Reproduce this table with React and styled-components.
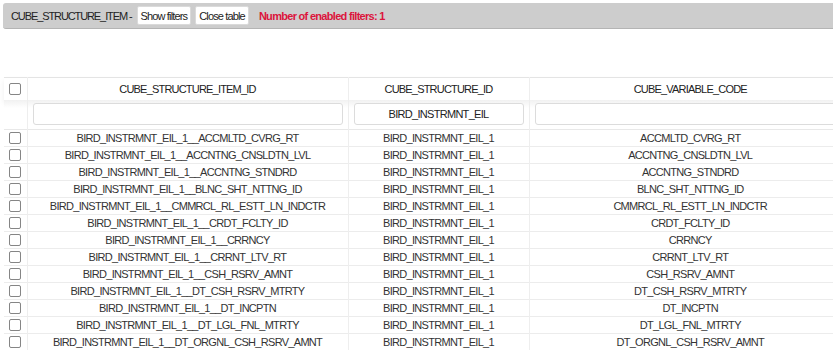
import React from "react";
import styled, { createGlobalStyle } from "styled-components";

const GlobalStyle = createGlobalStyle`
  html, body {
    margin: 0;
    padding: 0;
    overflow: hidden;
    background: #fff;
  }
  body {
    font-family: "Liberation Sans", Arial, sans-serif;
    font-size: 11px;
    letter-spacing: -0.7px;
    color: #333;
  }
`;

const rows = [
  "ACCMLTD_CVRG_RT",
  "ACCNTNG_CNSLDTN_LVL",
  "ACCNTNG_STNDRD",
  "BLNC_SHT_NTTNG_ID",
  "CMMRCL_RL_ESTT_LN_INDCTR",
  "CRDT_FCLTY_ID",
  "CRRNCY",
  "CRRNT_LTV_RT",
  "CSH_RSRV_AMNT",
  "DT_CSH_RSRV_MTRTY",
  "DT_INCPTN",
  "DT_LGL_FNL_MTRTY",
  "DT_ORGNL_CSH_RSRV_AMNT",
];

const Page = styled.div`
  width: 900px;
  padding: 3px 0 0 3px;
`;

const Toolbar = styled.div`
  display: flex;
  align-items: center;
  height: 25px;
  padding: 0 8px;
  background: #cdcdcd;
  border-bottom: 1px solid #b4b4b4;
  border-radius: 3px 0 0 3px;
  color: #222;
`;

const Title = styled.span`
  margin-right: 5px;
  letter-spacing: -1.1px;
`;

const ToolButton = styled.button`
  height: 19px;
  margin-right: 4px;
  padding: 0 3px;
  background: #fff;
  border: 1px solid #dadada;
  border-radius: 2px;
  font-family: inherit;
  font-size: 11px;
  letter-spacing: -0.85px;
  color: #222;
`;

const FilterCount = styled.span`
  margin-left: 6px;
  font-weight: bold;
  color: #dc143c;
`;

const Table = styled.table`
  margin: 48px 0 0 1px;
  border-collapse: collapse;
  table-layout: fixed;
  width: 847px;
  border-top: 1px solid #e4e4e4;
`;

const HeadRow = styled.tr`
  height: 22px;
  box-shadow: 0 3px 6px rgba(0, 0, 0, 0.07);
`;

const HeadCell = styled.th`
  padding: 0;
  font-weight: normal;
  color: #222;
  text-align: center;
  letter-spacing: -0.8px;
  border-left: 1px solid #eee;
  &:first-child {
    border-left: none;
  }
`;

const FilterRow = styled.tr`
  height: 30px;
  border-bottom: 1px solid #e8e8e8;
  background: linear-gradient(#f1f1f1 0, #fff 8px);
`;

const FilterCell = styled.td`
  padding: 0 5px;
  border-left: 1px solid #eee;
  &:first-child {
    border-left: none;
  }
`;

const FilterInput = styled.input`
  box-sizing: border-box;
  display: block;
  width: 100%;
  height: 22px;
  border: 1px solid #dcdcdc;
  border-radius: 3px;
  background: #fff;
  font-family: inherit;
  font-size: 11px;
  letter-spacing: -0.7px;
  color: #222;
  text-align: center;
  outline: none;
`;

const BodyRow = styled.tr`
  height: 16px;
  border-bottom: 1px solid #ececec;
`;

const Cell = styled.td`
  padding: 0;
  height: 16px;
  line-height: 16px;
  text-align: center;
  white-space: nowrap;
  overflow: hidden;
  border-left: 1px solid #eee;
  &:first-child {
    border-left: none;
  }
`;

const Check = styled.span`
  display: inline-block;
  box-sizing: border-box;
  width: 12px;
  height: 12px;
  vertical-align: middle;
  margin-top: -2px;
  border: 1px solid #858585;
  border-radius: 2px;
  background: #fff;
`;

export default function App() {
  return (
    <Page>
      <GlobalStyle />
      <Toolbar>
        <Title>CUBE_STRUCTURE_ITEM -</Title>
        <ToolButton>Show filters</ToolButton>
        <ToolButton>Close table</ToolButton>
        <FilterCount>Number of enabled filters: 1</FilterCount>
      </Toolbar>

      <Table>
        <colgroup>
          <col style={{ width: 23 }} />
          <col style={{ width: 321 }} />
          <col style={{ width: 181 }} />
          <col style={{ width: 322 }} />
        </colgroup>
        <thead>
          <HeadRow>
            <HeadCell>
              <Check />
            </HeadCell>
            <HeadCell>CUBE_STRUCTURE_ITEM_ID</HeadCell>
            <HeadCell>CUBE_STRUCTURE_ID</HeadCell>
            <HeadCell>CUBE_VARIABLE_CODE</HeadCell>
          </HeadRow>
        </thead>
        <tbody>
          <FilterRow>
            <FilterCell />
            <FilterCell>
              <FilterInput defaultValue="" />
            </FilterCell>
            <FilterCell>
              <FilterInput defaultValue="BIRD_INSTRMNT_EIL" />
            </FilterCell>
            <FilterCell>
              <FilterInput defaultValue="" />
            </FilterCell>
          </FilterRow>
          {rows.map(code => (
            <BodyRow key={code}>
              <Cell>
                <Check />
              </Cell>
              <Cell>BIRD_INSTRMNT_EIL_1__{code}</Cell>
              <Cell>BIRD_INSTRMNT_EIL_1</Cell>
              <Cell>{code}</Cell>
            </BodyRow>
          ))}
        </tbody>
      </Table>
    </Page>
  );
}
